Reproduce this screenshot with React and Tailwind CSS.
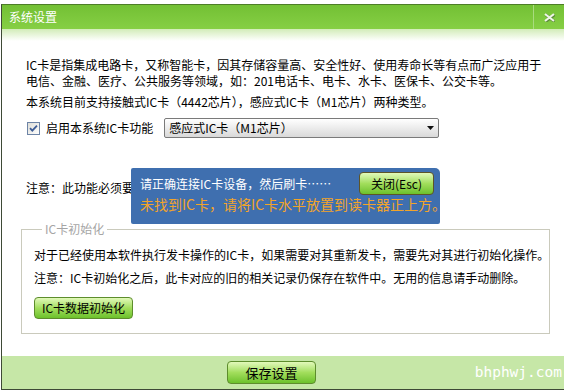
export default function App() {
  const greenBtn =
    "flex items-center justify-center border rounded-[4px] bg-gradient-to-b from-[#e2f9b9] via-[#a2de5c] to-[#6cc12a] text-black whitespace-nowrap";
  return (
    <div className="w-[564px] h-[391px] bg-white relative overflow-hidden font-['Noto_Sans_CJK_SC',sans-serif] text-[12px] text-black whitespace-nowrap">
      <div className="mt-[4px] ml-[1px] w-[563px] h-[386px] border-l border-b border-t border-l-[#3e4a36] border-b-[#3e4a36] border-t-[#4d7d27] flex flex-col">
        {/* title bar */}
        <div className="h-[24px] flex items-stretch bg-gradient-to-b from-[#73c034] to-[#86cf44]">
          <div className="flex-1 flex items-center pl-[7px] text-white text-[12px] leading-none">系统设置</div>
          <div className="w-px bg-[#a9db7f]" />
          <div className="w-[30px] flex items-center justify-center">
            <svg width="11" height="9" viewBox="0 0 11 9">
              <path d="M1 1 L10 8 M10 1 L1 8" stroke="#5c8a3a" strokeWidth="3" transform="translate(0.6,0.6)" />
              <path d="M1 1 L10 8 M10 1 L1 8" stroke="#eef5e6" strokeWidth="2.2" />
            </svg>
          </div>
        </div>
        <div className="h-[12px] bg-gradient-to-b from-[#d2ecb8] to-white" />

        {/* content */}
        <div className="flex-1 pl-[19px] flex flex-col">
          <p className="pl-[5px] mt-[16px] leading-[16px]">
            IC卡是指集成电路卡，又称智能卡，因其存储容量高、安全性好、使用寿命长等有点而广泛应用于
            <br />
            电信、金融、医疗、公共服务等领域，如：201电话卡、电卡、水卡、医保卡、公交卡等。
          </p>
          <p className="pl-[5px] mt-[5px] leading-[16px]">本系统目前支持接触式IC卡（4442芯片），感应式IC卡（M1芯片）两种类型。</p>
          <div className="pl-[6px] mt-[8px] h-[20px] flex items-center">
            <svg width="13" height="13" viewBox="0 0 13 13">
              <defs>
                <linearGradient id="cb" x1="0" y1="0" x2="1" y2="1">
                  <stop offset="0" stopColor="#dcdcd6" />
                  <stop offset="1" stopColor="#ffffff" />
                </linearGradient>
              </defs>
              <rect x="0.5" y="0.5" width="12" height="12" fill="url(#cb)" stroke="#6d84a6" />
              <path d="M3 6.2 L5.3 8.6 L10 3.6" fill="none" stroke="#3d5c96" strokeWidth="1.8" />
            </svg>
            <span className="ml-[6px] leading-[16px]">启用本系统IC卡功能</span>
            <div className="ml-[11px] w-[275px] h-[20px] border border-[#7a7a7a] rounded-[2px] bg-gradient-to-b from-white to-[#d9d9d9] flex items-center pl-[4px] pr-[4px]">
              <span className="flex-1 leading-[16px]">感应式IC卡（M1芯片）</span>
              <svg width="7" height="4" viewBox="0 0 7 4">
                <path d="M0 0 L7 0 L3.5 4 Z" fill="#111" />
              </svg>
            </div>
          </div>
          <p className="pl-[5px] mt-[42px] leading-[16px]">注意：此功能必须要</p>

          <fieldset className="mt-[25px] w-[529px] border border-[#cacabc] pl-[12px] pb-[14px]">
            <legend className="ml-[8px] px-[3px] leading-[16px] text-[#a5a5a5]">IC卡初始化</legend>
            <p className="mt-[10px] leading-[16px] whitespace-nowrap">对于已经使用本软件执行发卡操作的IC卡，如果需要对其重新发卡，需要先对其进行初始化操作。</p>
            <p className="mt-[7px] leading-[16px] whitespace-nowrap">注意：IC卡初始化之后，此卡对应的旧的相关记录仍保存在软件中。无用的信息请手动删除。</p>
            <button className={greenBtn + " mt-[11px] w-[99px] h-[22px] border-[#5d8d2c] leading-[16px]"}>IC卡数据初始化</button>
          </fieldset>
        </div>

        {/* footer */}
        <div className="h-[33px] bg-[#c6e7a7] flex items-center pl-[225px] pr-[2px]">
          <button className={greenBtn + " w-[89px] h-[23px] border-[#5d8d2c] text-[13px] leading-[16px]"}>保存设置</button>
          <span className="ml-auto text-white text-[14.5px] font-['DejaVu_Sans_Mono',monospace] leading-none">bhphwj.com</span>
        </div>
      </div>

      {/* popup overlay */}
      <div className="absolute left-[131px] top-[168px] w-[309px] h-[56px] bg-[#3f6faf] rounded-tr-[5px] rounded-[2px] pl-[9px] pr-[6px] pt-[4px]">
        <div className="h-[23px] flex items-center justify-between">
          <span className="text-white leading-[16px] whitespace-nowrap">请正确连接IC卡设备，然后刷卡……</span>
          <button className={greenBtn + " w-[75px] h-[23px] border-[#5d5428] rounded-[3px] leading-[16px]"}>关闭(Esc)</button>
        </div>
        <div className="text-[14px] leading-[18px] text-[#f2a42a] whitespace-nowrap">未找到IC卡，请将IC卡水平放置到读卡器正上方。</div>
      </div>
    </div>
  );
}
